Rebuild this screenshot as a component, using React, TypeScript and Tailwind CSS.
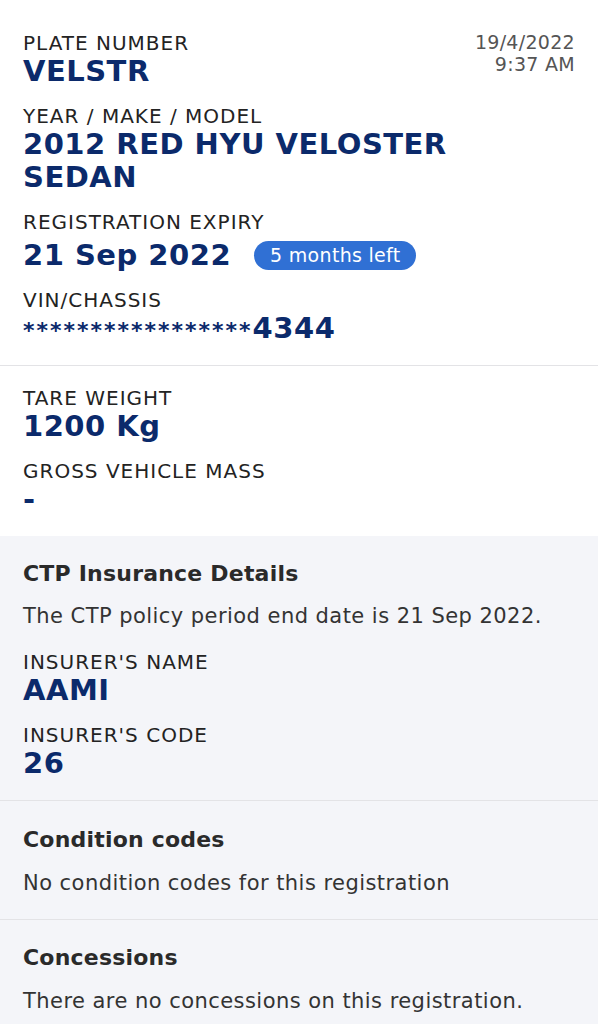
import React from "react";

const font = { fontFamily: "'DejaVu Sans', 'Noto Sans', sans-serif" };

function Field({ label, children, className = "" }: { label: string; children: React.ReactNode; className?: string }) {
  return (
    <div className={className}>
      <div className="text-[20px] leading-[24px] tracking-[1px] text-[#232323]">{label}</div>
      <div className="text-[29px] leading-[33px] tracking-[0.5px] font-bold text-[#0b2a6b]">{children}</div>
    </div>
  );
}

function Section({ title, children, className = "" }: { title: string; children: React.ReactNode; className?: string }) {
  return (
    <section className={`px-[23px] ${className}`}>
      <h2 className="text-[22px] leading-[28px] tracking-[0.2px] font-bold text-[#2a2a2a]">{title}</h2>
      {children}
    </section>
  );
}

const body = "text-[21px] leading-[28px] tracking-[0.45px] text-[#333]";

export default function App() {
  return (
    <main style={font} className="w-[598px] min-h-[1024px] bg-[#f4f5f9]">
      <div className="bg-white px-[23px] pt-[31px] pb-[18px] border-b border-[#e3e3e6]">
        <div className="flex justify-between">
          <Field label="PLATE NUMBER">VELSTR</Field>
          <div className="text-right text-[19px] leading-[22px] tracking-[0.3px] text-[#555]">
            <div>19/4/2022</div>
            <div>9:37 AM</div>
          </div>
        </div>
        <Field label="YEAR / MAKE / MODEL" className="mt-4">
          2012 RED HYU VELOSTER
          <br />
          SEDAN
        </Field>
        <div className="mt-4">
          <div className="text-[20px] leading-[24px] tracking-[1px] text-[#232323]">REGISTRATION EXPIRY</div>
          <div className="flex items-center gap-[23px] pt-[5px]">
            <span className="text-[29px] leading-[33px] tracking-[0.5px] font-bold text-[#0b2a6b]">21 Sep 2022</span>
            <span className="h-[29px] px-[16px] rounded-full bg-[#3070d4] text-white text-[19px] leading-[29px] tracking-[0.3px]">
              5 months left
            </span>
          </div>
        </div>
        <Field label="VIN/CHASSIS" className="mt-4">
          <span className="text-[22px] tracking-[2px] font-bold">*****************</span>4344
        </Field>
      </div>

      <div className="bg-white px-[23px] pt-[20px] pb-[20px]">
        <Field label="TARE WEIGHT">1200 Kg</Field>
        <Field label="GROSS VEHICLE MASS" className="mt-4">
          -
        </Field>
      </div>

      <Section title="CTP Insurance Details" className="pt-[24px] pb-[20px] border-b border-[#e3e3e6]">
        <p className={`mt-[14px] ${body}`}>The CTP policy period end date is 21 Sep 2022.</p>
        <Field label="INSURER'S NAME" className="mt-5">AAMI</Field>
        <Field label="INSURER'S CODE" className="mt-4">26</Field>
      </Section>

      <Section title="Condition codes" className="pt-[25px] pb-[22px] border-b border-[#e3e3e6]">
        <p className={`mt-[15px] ${body}`}>No condition codes for this registration</p>
      </Section>

      <Section title="Concessions" className="pt-[24px] pb-[20px]">
        <p className={`mt-[15px] ${body}`}>There are no concessions on this registration.</p>
      </Section>
    </main>
  );
}
